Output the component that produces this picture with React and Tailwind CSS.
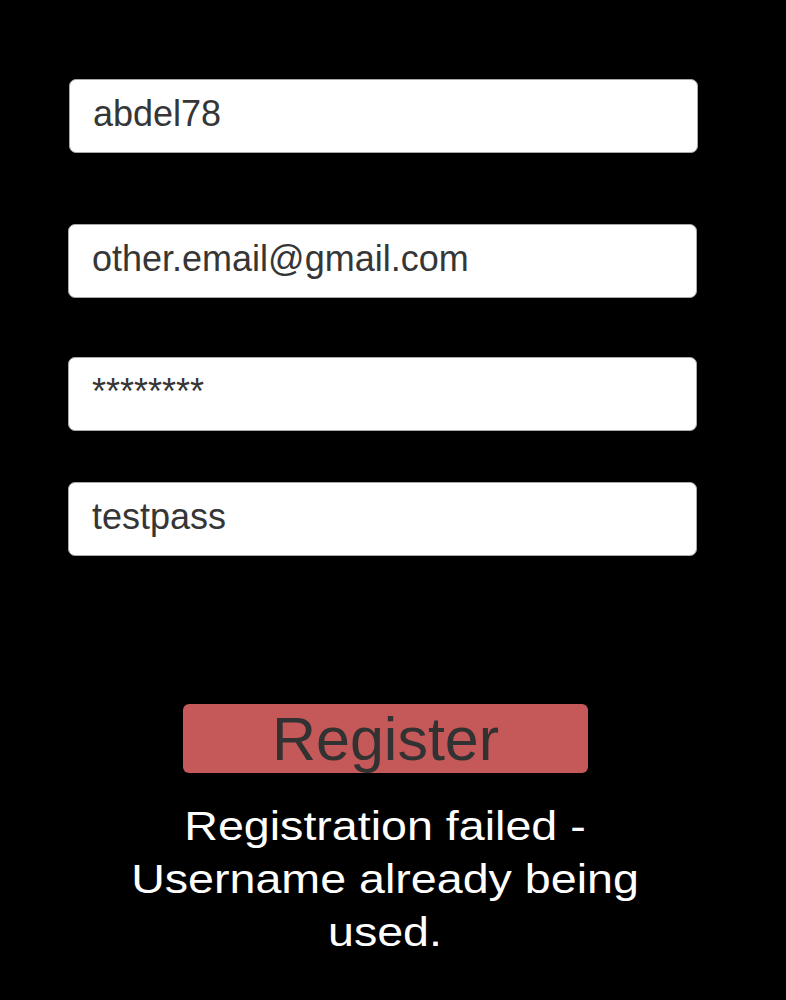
export default function App() {
    const fields = [
        { value: "abdel78", cls: "mt-[79px] ml-[69px]" },
        { value: "other.email@gmail.com", cls: "mt-[71px] ml-[68px]" },
        { value: "********", cls: "mt-[59px] ml-[68px]" },
        { value: "testpass", cls: "mt-[51px] ml-[68px]" },
    ];

    return (
        <div
            className="w-[786px] h-[1000px] bg-black overflow-hidden flex flex-col"
            style={{ fontFamily: '"Liberation Sans", Arial, sans-serif' }}
        >
            {/* 输入框 */}
            {fields.map((f, i) => (
                <div
                    key={i}
                    className={`${f.cls} w-[629px] h-[74px] shrink-0 bg-white rounded-[7px] border border-[#a8a8a8] pl-[23px] pt-[14px] text-[36px] leading-[40px] text-[#363636]`}
                >
                    {f.value}
                </div>
            ))}

            {/* 注册按钮 */}
            <div className="mt-[148px] ml-[183px] w-[405px] h-[69px] shrink-0 bg-[#c55959] rounded-[6px] flex items-center justify-center text-[61px] leading-none text-[#323232] pt-[2px]">
                Register
            </div>

            {/* 错误提示 */}
            <p className="mt-[27px] ml-[150px] w-[470px] origin-center scale-x-[1.165] text-center text-white text-[40px] leading-[53px]">
                Registration failed - Username already being used.
            </p>
        </div>
    );
}
